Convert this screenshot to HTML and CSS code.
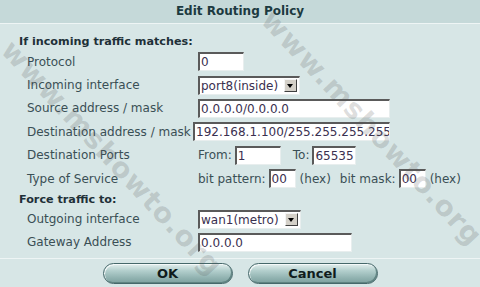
FILE: index.html
```html
<!DOCTYPE html>
<html>
<head>
<meta charset="utf-8">
<link rel="stylesheet" href="styles.css">
</head>
<body>
<div class="dialog">
  <div class="title">Edit Routing Policy</div>
  <div class="content">
    <div class="section">If incoming traffic matches:</div>
    <div class="row">
      <span class="label">Protocol</span>
      <div class="field"><span class="input w-proto">0</span></div>
    </div>
    <div class="row">
      <span class="label">Incoming interface</span>
      <div class="field"><span class="select w-sel1"><span class="sel-text">port8(inside)</span><span class="sel-btn"></span></span></div>
    </div>
    <div class="row">
      <span class="label">Source address / mask</span>
      <div class="field"><span class="input w-addr">0.0.0.0/0.0.0.0</span></div>
    </div>
    <div class="row">
      <span class="label">Destination address / mask</span>
      <div class="field"><span class="input w-dest">192.168.1.100/255.255.255.255</span></div>
    </div>
    <div class="row">
      <span class="label">Destination Ports</span>
      <div class="field">
        <span class="txt">From:</span><span class="input w-from">1</span>
        <span class="txt gap-to">To:</span><span class="input w-to">65535</span>
      </div>
    </div>
    <div class="row">
      <span class="label">Type of Service</span>
      <div class="field">
        <span class="txt">bit pattern:</span><span class="input w-hex">00</span><span class="txt">(hex)</span>
        <span class="txt gap-mask">bit mask:</span><span class="input w-hex">00</span><span class="txt">(hex)</span>
      </div>
    </div>
    <div class="section s2">Force traffic to:</div>
    <div class="row">
      <span class="label">Outgoing interface</span>
      <div class="field"><span class="select w-sel2"><span class="sel-text">wan1(metro)</span><span class="sel-btn"></span></span></div>
    </div>
    <div class="row">
      <span class="label">Gateway Address</span>
      <div class="field"><span class="input w-gw">0.0.0.0</span></div>
    </div>
  </div>
  <div class="footer">
    <button class="btn">OK</button>
    <button class="btn">Cancel</button>
  </div>
  <div class="wm wm1">www.mshowto.org</div>
  <div class="wm wm2">www.mshowto.org</div>
</div>
</body>
</html>
```
FILE: styles.css
```css
html, body {
  margin: 0;
  padding: 0;
  width: 480px;
  height: 287px;
  overflow: hidden;
}
body {
  font-family: "DejaVu Sans", Verdana, sans-serif;
  background: #d7e6e6;
}
.dialog {
  position: relative;
  width: 480px;
  height: 287px;
  overflow: hidden;
  background: #d7e6e6;
}
.title {
  height: 23px;
  line-height: 23px;
  background: #c5d9d9;
  border-bottom: 1px solid #eef5f5;
  text-align: center;
  font-weight: bold;
  font-size: 12px;
  color: #1c3a40;
}
.content {
  padding: 10px 0 4px 0;
}
.section {
  height: 16px;
  line-height: 16px;
  padding-left: 19px;
  font-weight: bold;
  font-size: 11.2px;
  color: #1e3038;
}
.section.s2 {
  height: 17px;
  line-height: 19px;
}
.row {
  height: 23.4px;
  display: grid;
  grid-template-columns: 171px 1fr;
  align-items: center;
  padding-left: 27px;
}
.label {
  font-size: 12px;
  color: #3a4f55;
  white-space: nowrap;
}
.field {
  display: flex;
  align-items: center;
  font-size: 12px;
  color: #3a4f55;
}
.txt {
  white-space: nowrap;
}
.input {
  box-sizing: border-box;
  height: 19px;
  line-height: 17px;
  background: #fff;
  border-top: 2px solid #5a5a5a;
  border-left: 2px solid #5a5a5a;
  border-right: 1px solid #e8eeee;
  border-bottom: 1px solid #e8eeee;
  padding-left: 1px;
  font-size: 12px;
  color: #3a3050;
  white-space: nowrap;
  overflow: hidden;
}
.w-proto { width: 46px; }
.w-addr { width: 192px; }
.w-dest { width: 197px; margin-left: -5px; }
.w-from { width: 46px; margin-left: 3px; }
.w-to { width: 44px; margin-left: 3px; }
.gap-to { margin-left: 12px; }
.w-hex { width: 27px; margin: 0 4px 0 3px; }
.gap-mask { margin-left: 9px; }
.w-gw { width: 154px; }
.select {
  box-sizing: border-box;
  height: 19px;
  display: flex;
  align-items: center;
  background: #fff;
  border-top: 2px solid #5a5a5a;
  border-left: 2px solid #5a5a5a;
  border-right: 1px solid #e8eeee;
  border-bottom: 1px solid #e8eeee;
  padding-left: 1px;
  font-size: 12px;
  color: #3a3050;
}
.w-sel1 { width: 102px; }
.w-sel2 { width: 103px; }
.sel-text {
  flex: 1;
  white-space: nowrap;
  overflow: hidden;
}
.sel-btn {
  position: relative;
  flex: none;
  width: 13px;
  height: 13px;
  margin-right: 2px;
  background: #d4d0c8;
  border-top: 1px solid #f4f4f4;
  border-left: 1px solid #f4f4f4;
  border-right: 1px solid #404040;
  border-bottom: 1px solid #404040;
  box-sizing: border-box;
}
.sel-btn::after {
  content: "";
  position: absolute;
  left: 2px;
  top: 4px;
  border-left: 3.5px solid transparent;
  border-right: 3.5px solid transparent;
  border-top: 4px solid #000;
}
.footer {
  border-top: 1px solid #eef5f5;
  display: flex;
  justify-content: center;
  gap: 15px;
  padding-top: 4px;
}
.btn {
  width: 130px;
  height: 21px;
  border: 1px solid #46686a;
  border-radius: 11px;
  background: linear-gradient(#e4efee 0%, #b3cfcd 35%, #8fb1af 75%, #7ea19f 100%);
  font-family: "DejaVu Sans", Verdana, sans-serif;
  font-weight: bold;
  font-size: 13px;
  color: #101c1c;
  padding: 0;
  box-shadow: inset 1px 1px 0 #f4f9f9, inset -1px -1px 0 #5f8381;
}
.wm {
  position: absolute;
  font-family: "DejaVu Sans", Verdana, sans-serif;
  font-weight: bold;
  font-size: 28px;
  color: rgba(80, 80, 80, 0.2);
  white-space: nowrap;
  transform: translate(-50%, -50%) rotate(47deg);
  pointer-events: none;
  letter-spacing: 1px;
}
.wm1 { left: 112px; top: 158px; }
.wm2 { left: 372px; top: 128px; }
```
